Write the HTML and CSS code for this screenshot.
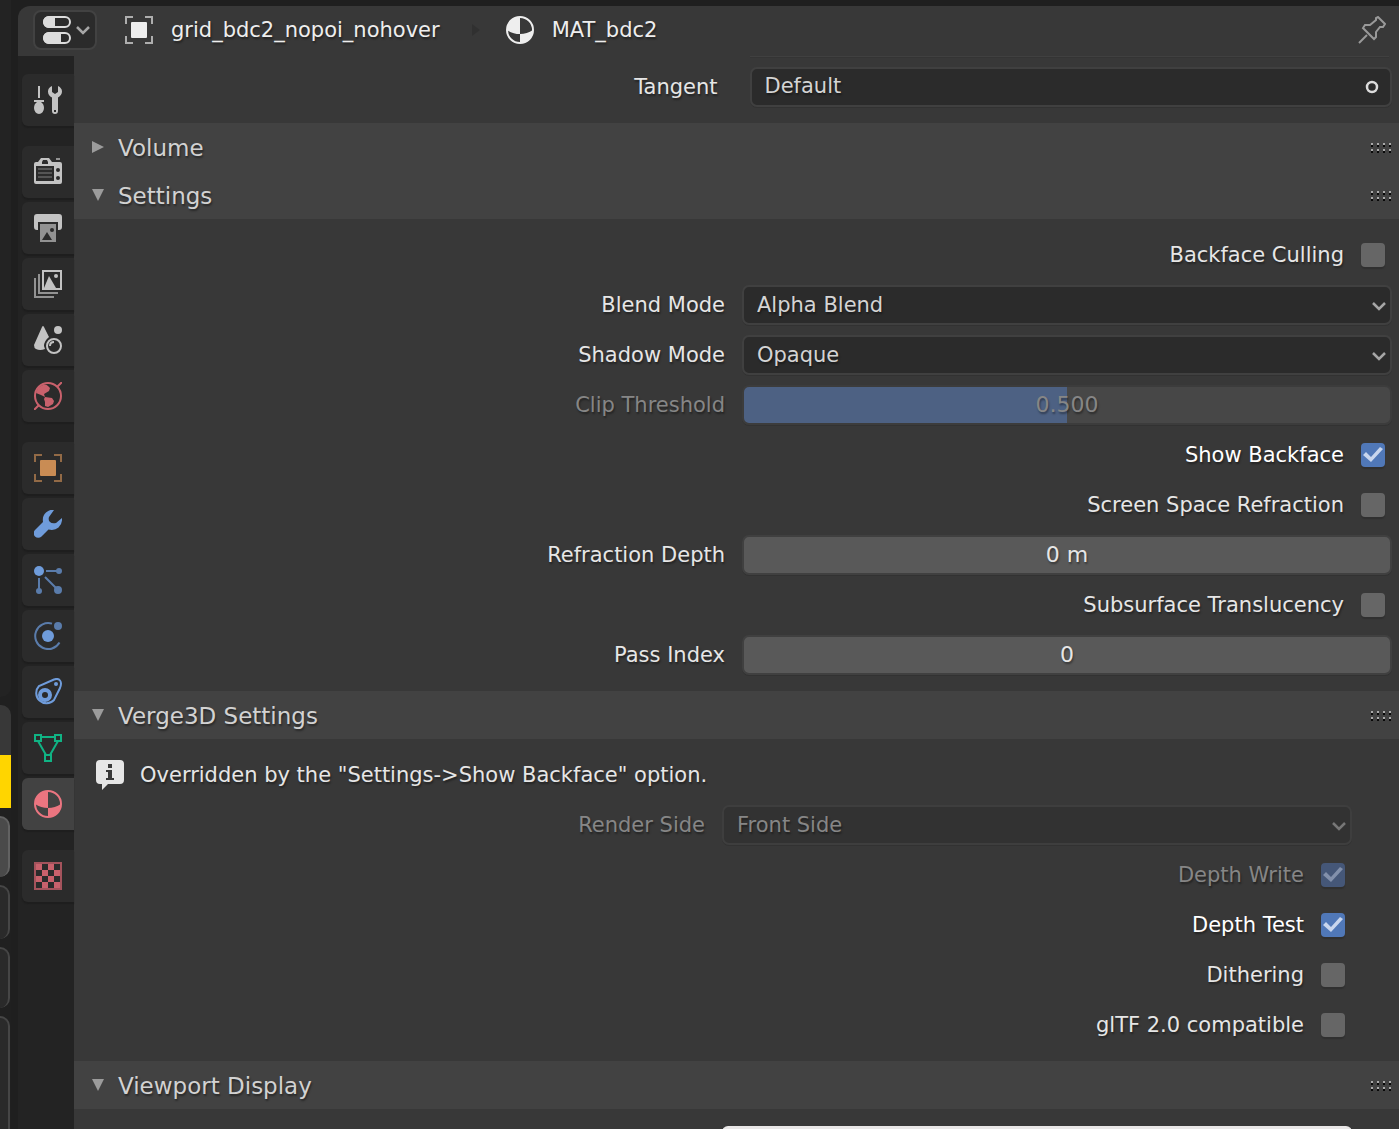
FILE: index.html
```html
<!DOCTYPE html>
<html lang="en">
<head>
<meta charset="utf-8">
<title>Material Properties</title>
<link rel="stylesheet" href="styles.css">
</head>
<body>
<svg class="defs" width="0" height="0" aria-hidden="true">
  <symbol id="chevron" viewBox="0 0 14 10"><path d="M1 2l6 6 6-6" fill="none" stroke="currentColor" stroke-width="2.5"/></symbol>
  <symbol id="object" viewBox="0 0 28 28"><path class="soft" d="M1 8V1h7M20 1h7v7M27 20v7h-7M8 27H1v-7" fill="none" stroke="currentColor" stroke-width="2"/><rect x="6" y="6" width="16" height="16" rx="1" fill="currentColor"/></symbol>
  <symbol id="material" viewBox="0 0 28 28"><circle cx="14" cy="14" r="13" fill="none" stroke="currentColor" stroke-width="2"/><path d="M14 1v17Q7 18 1 14A13 13 0 0 1 14 1zM14 18q7 0 13-4a13 13 0 0 1-13 13z" fill="currentColor"/></symbol>
  <symbol id="grip" viewBox="0 0 22 11"><path d="M1 1h2M7 1h2M13 1h2M19 1h2M1 7h2M7 7h2M13 7h2M19 7h2" stroke="#aaa" stroke-width="2"/><path d="M1 3h2M7 3h2M13 3h2M19 3h2M1 9h2M7 9h2M13 9h2M19 9h2" stroke="#080808" stroke-width="2"/></symbol>
  <symbol id="tri" viewBox="0 0 12 12"><path d="M0 0h12L6 12z" fill="#9b9b9b"/></symbol>
</svg>
<div class="app">
  <div class="neighbour">
    <div class="nb-area"></div>
    <div class="nb-panel"></div>
    <div class="nb-selected"></div>
    <div class="nb-button lit"></div>
    <div class="nb-button"></div>
    <div class="nb-button tall"></div>
    <div class="nb-box"></div>
  </div>
  <div class="editor">
    <header class="bar">
      <button class="editor-type" aria-label="Editor type">
        <svg width="28" height="28" viewBox="0 0 28 28"><g fill="none" stroke="#dcdcdc" stroke-width="2"><rect x="1" y="1" width="26" height="10" rx="5"/><rect x="1" y="17" width="26" height="10" rx="5"/></g><path d="M12 0v12H6A6 6 0 0 1 6 0zM18 16v12H6a6 6 0 0 1 0-12z" fill="#dcdcdc"/></svg>
        <svg class="chev" width="14" height="10"><use href="#chevron"/></svg>
      </button>
      <svg class="crumb-icon object" width="28" height="28"><use href="#object"/></svg>
      <span class="crumb">grid_bdc2_nopoi_nohover</span>
      <svg class="crumb-sep" width="8" height="12" viewBox="0 0 8 12"><path d="M0 0l8 6-8 6z" fill="#303030"/></svg>
      <svg class="crumb-icon" width="28" height="28"><use href="#material"/></svg>
      <span class="crumb">MAT_bdc2</span>
      <button class="pin" aria-label="Pin"><svg width="28" height="28" viewBox="0 0 28 28"><path d="M1 27l8-8M20 1l7 7-2 3-3 0-4 5 0 5-2 2L5 12l2-3h5l6-5V2z" fill="none" stroke="#999" stroke-width="2"/></svg></button>
    </header>
    <div class="main">
      <nav class="tabs">
        <div class="tab-group">
          <button class="tab" aria-label="Tool"><svg width="28" height="28" viewBox="0 0 28 28"><path d="M4 0h2v12H4zM0 14h10v2H7q3 2 3 6a5 6 0 0 1-10 0q0-4 3-6H0zM18 0v6l3 2 3-2V0q4 2 4 5.500t-4 6V25a3 3 0 0 1-6 0V11.500q-4-2-4-6T18 0z" fill="#c3c3c3"/><rect x="20" y="24" width="2" height="2" fill="#2b2b2b"/></svg></button>
        </div>
        <div class="tab-group">
          <button class="tab" aria-label="Render"><svg width="28" height="28" viewBox="0 0 28 28"><path d="M2 4h2l3-4h8l3 4h8q2 0 2 2v18q0 2-2 2H2q-2 0-2-2V6q0-2 2-2z" fill="#c3c3c3"/><path d="M9 2h4l1 2v2H8V4zM2 8h18v15H2z" fill="#2b2b2b"/><path d="M4 11h14M4 15h14M4 19h14" stroke="#555" stroke-width="2"/><path d="M22 1h4" stroke="#929292" stroke-width="2"/><circle cx="24" cy="12" r="2" fill="#2b2b2b"/><circle cx="24" cy="20" r="2" fill="#2b2b2b"/></svg></button>
          <button class="tab" aria-label="Output"><svg width="28" height="28" viewBox="0 0 28 28"><path d="M3 0h22q3 0 3 3v10q0 3-3 3h-1V8H4v8H3q-3 0-3-3V3q0-3 3-3z" fill="#c3c3c3"/><path d="M6 10h16v18H6z" fill="#929292"/><path d="M8 26l5-8 5 8z" fill="#2b2b2b"/><circle cx="18" cy="16" r="2" fill="#2b2b2b"/></svg></button>
          <button class="tab" aria-label="View layer"><svg width="28" height="28" viewBox="0 0 28 28"><path d="M1 8v19h19M5 4v19h19" fill="none" stroke="#929292" stroke-width="2"/><rect x="9" y="1" width="18" height="18" fill="#2b2b2b" stroke="#c3c3c3" stroke-width="2"/><path d="M10 18l5-12 7 12z" fill="#c3c3c3"/><circle cx="22" cy="6" r="2" fill="#c3c3c3"/></svg></button>
          <button class="tab" aria-label="Scene"><svg width="28" height="28" viewBox="0 0 28 28"><path d="M8 1q1-2 2 0l5 10q-5 4-5 9l1 3q-5 2-9 0-2-1-2-4z" fill="#c3c3c3"/><circle cx="24" cy="4" r="4" fill="#c3c3c3"/><circle cx="20" cy="20" r="7" fill="none" stroke="#c3c3c3" stroke-width="2"/><path d="M16 20q0-4 4-4" fill="none" stroke="#c3c3c3" stroke-width="2"/></svg></button>
          <button class="tab" aria-label="World"><svg width="28" height="28" viewBox="0 0 28 28"><g fill="none" stroke="#c9616c" stroke-width="2"><circle cx="14" cy="14" r="13"/><path d="M23 5l5-5M0 28l5-5"/></g><path d="M4 6q7-6 10-2l2 2-1 3-5 3 1 3-4-2-5-2zM11 15l7 1 2 3-1 3-5 3-3-1v-4l-1-3z" fill="#c9616c"/></svg></button>
        </div>
        <div class="tab-group">
          <button class="tab orange" aria-label="Object"><svg class="object" width="28" height="28"><use href="#object"/></svg></button>
          <button class="tab" aria-label="Modifiers"><svg width="28" height="28" viewBox="0 0 28 28"><path d="M20 0q-4-1-8 2.500Q8 6 9 12l-8 8a4.500 4.500 0 0 0 6.500 6.500l7-7q6 1.500 10-2T28 8l-6 5q-4 1-6-1t-1-5z" fill="#6f9cdb"/></svg></button>
          <button class="tab" aria-label="Particles"><svg width="28" height="28" viewBox="0 0 28 28"><g fill="#5a7cab"><circle cx="25" cy="5" r="3"/><circle cx="5" cy="25" r="3"/><circle cx="24" cy="24" r="4"/></g><path d="M12 5h12M5 12v12M11 11l12 12" stroke="#5a7cab" stroke-width="2"/><circle cx="5" cy="5" r="5" fill="#6f9cdb"/></svg></button>
          <button class="tab" aria-label="Physics"><svg width="28" height="28" viewBox="0 0 28 28"><path d="M18 1.600A13 13 0 1 0 25.500 20.500" fill="none" stroke="#5a7cab" stroke-width="2"/><circle cx="24" cy="4" r="4" fill="#5a7cab"/><circle cx="14" cy="14" r="6" fill="#6f9cdb"/></svg></button>
          <button class="tab" aria-label="Constraints"><svg width="28" height="28" viewBox="0 0 28 28"><path d="M20 1.500q4-1.500 6 1t0 7.500l-6 12a10 10 0 1 1-15-14z" fill="none" stroke="#6f9cdb" stroke-width="2"/><circle cx="11" cy="17" r="5" fill="none" stroke="#6f9cdb" stroke-width="4"/><circle cx="22" cy="6" r="2" fill="#6f9cdb"/></svg></button>
          <button class="tab" aria-label="Object data"><svg width="28" height="28" viewBox="0 0 28 28"><path d="M1 1h6v6H1zM21 1h6v6h-6zM11 21h6v6h-6zM7 3h14M4 7l8 14M24 7l-8 14" fill="none" stroke="#10b384" stroke-width="2"/></svg></button>
          <button class="tab active" aria-label="Material"><svg width="28" height="28"><use href="#material"/></svg></button>
        </div>
        <div class="tab-group">
          <button class="tab" aria-label="Texture"><svg width="28" height="28" viewBox="0 0 28 28"><rect x="1" y="1" width="26" height="26" fill="#2b2b2b" stroke="#a4535c" stroke-width="2"/><path d="M2 2h6v6H2zM14 2h6v6h-6zM8 8h6v6H8zM20 8h6v6h-6zM2 14h6v6H2zM14 14h6v6h-6zM8 20h6v6H8zM20 20h6v6h-6z" fill="#c9616c"/></svg></button>
        </div>
      </nav>
      <main class="panels">
        <div class="scrolled-field"></div>
        <section class="body first">
          <div class="row wide">
            <label class="label" for="tangent">Tangent</label>
            <div class="control"><input class="field" id="tangent" type="text" value="Default"><svg class="dot" width="14" height="14" viewBox="0 0 14 14"><circle cx="7" cy="7" r="5" fill="none" stroke="#dcdcdc" stroke-width="2.500"/></svg></div>
          </div>
        </section>
        <h2 class="panel-head"><button><svg class="closed" width="12" height="12"><use href="#tri"/></svg>Volume</button><svg width="22" height="11"><use href="#grip"/></svg></h2>
        <h2 class="panel-head"><button><svg width="12" height="12"><use href="#tri"/></svg>Settings</button><svg width="22" height="11"><use href="#grip"/></svg></h2>
        <section class="body">
          <label class="check">Backface Culling<input type="checkbox"></label>
          <div class="row">
            <label class="label" for="blend">Blend Mode</label>
            <div class="control"><select class="field" id="blend"><option>Alpha Blend</option></select><svg class="chev" width="14" height="10"><use href="#chevron"/></svg></div>
          </div>
          <div class="row">
            <label class="label" for="shadow">Shadow Mode</label>
            <div class="control"><select class="field" id="shadow"><option>Opaque</option></select><svg class="chev" width="14" height="10"><use href="#chevron"/></svg></div>
          </div>
          <div class="row disabled">
            <label class="label" for="clip">Clip Threshold</label>
            <div class="control"><input class="slider" id="clip" type="range" min="0" max="1" step="0.001" value="0.5" disabled><output class="slider-value" for="clip">0.500</output></div>
          </div>
          <label class="check">Show Backface<input type="checkbox" checked></label>
          <label class="check">Screen Space Refraction<input type="checkbox"></label>
          <div class="row">
            <label class="label" for="depth">Refraction Depth</label>
            <div class="control"><input class="number" id="depth" type="text" value="0 m"></div>
          </div>
          <label class="check">Subsurface Translucency<input type="checkbox"></label>
          <div class="row">
            <label class="label" for="pass">Pass Index</label>
            <div class="control"><input class="number" id="pass" type="text" value="0"></div>
          </div>
        </section>
        <h2 class="panel-head"><button><svg width="12" height="12"><use href="#tri"/></svg>Verge3D Settings</button><svg width="22" height="11"><use href="#grip"/></svg></h2>
        <section class="body inset">
          <p class="info"><svg width="28" height="30" viewBox="0 0 28 30"><path d="M4 0h20q4 0 4 4v16q0 4-4 4H12l-6 6v-6H4q-4 0-4-4V4q0-4 4-4z" fill="#e6e6e6"/><path d="M12 4h4v4h-4zM10 10h6v8h2v2h-8v-2h2v-6h-2z" fill="#383838"/></svg>Overridden by the "Settings-&gt;Show Backface" option.</p>
          <div class="row disabled">
            <label class="label" for="side">Render Side</label>
            <div class="control"><select class="field" id="side" disabled><option>Front Side</option></select><svg class="chev" width="14" height="10"><use href="#chevron"/></svg></div>
          </div>
          <label class="check disabled">Depth Write<input type="checkbox" checked disabled></label>
          <label class="check">Depth Test<input type="checkbox" checked></label>
          <label class="check">Dithering<input type="checkbox"></label>
          <label class="check">glTF 2.0 compatible<input type="checkbox"></label>
        </section>
        <h2 class="panel-head"><button><svg width="12" height="12"><use href="#tri"/></svg>Viewport Display</button><svg width="22" height="11"><use href="#grip"/></svg></h2>
        <section class="body inset">
          <div class="row">
            <span></span>
            <div class="control"><button class="swatch" aria-label="Viewport color"></button></div>
          </div>
        </section>
      </main>
    </div>
  </div>
</div>
</body>
</html>
```
FILE: styles.css
```css
* { box-sizing: border-box; }
body {
  margin: 0;
  background: #1f1f1f;
  color: #e6e6e6;
  font: 21px/28px "DejaVu Sans", sans-serif;
  text-shadow: 1px 2px 2px rgba(0, 0, 0, .4);
}
button, input, select { font: inherit; color: inherit; text-shadow: inherit; margin: 0; }
button { border: 0; padding: 0; background: none; }
svg { display: block; flex: none; }
.defs { position: absolute; }
.app { display: flex; height: 100vh; overflow: hidden; }

/* edge of the area to the left */
.neighbour { display: flex; flex-direction: column; width: 11px; margin-right: 7px; background: #202020; overflow: hidden; }
.neighbour > div { flex: none; }
.nb-area { height: 697px; background: #232323; border-bottom-right-radius: 10px; }
.nb-panel { height: 50px; margin-top: 8px; background: #383838; border-top-right-radius: 10px; }
.nb-selected { height: 53px; margin-bottom: 8px; background: #ffd500; }
.nb-button { height: 54px; margin: 0 1px 8px 0; background: #2a2a2a; border: 2px solid #464646; border-width: 2px 2px 0 0; border-radius: 0 10px 10px 0; }
.nb-button.lit { height: 61px; background: #4a4a4a; border-color: #626262; }
.nb-button.tall { height: 61px; }
.nb-box { height: 120px; margin-right: 1px; background: #2a2a2a; border: 2px solid #464646; border-width: 2px 2px 0 0; border-top-right-radius: 10px; }

.editor { display: flex; flex-direction: column; flex: 1; min-width: 0; margin-top: 6px; background: #383838; border-top-left-radius: 12px; overflow: hidden; }
.bar { display: flex; align-items: center; flex: none; height: 50px; padding: 0 13px 2px 15px; }
.editor-type { display: flex; align-items: center; gap: 5px; width: 64px; height: 40px; padding-left: 8px; background: #2b2b2b; border: 2px solid #424242; border-radius: 8px; }
.chev { color: #a6a6a6; }
.crumb-icon { margin: 0 18px 0 28px; color: #eee; }
.crumb { color: #eee; }
.crumb-sep { margin-left: 32px; }
.crumb-sep + .crumb-icon { margin-left: 26px; }
.soft { opacity: .65; }
.pin { margin-left: auto; }

.main { display: flex; flex: 1; min-height: 0; }
.tabs { display: flex; flex-direction: column; flex: none; gap: 20px; width: 56px; padding: 18px 0 0 4px; background: #232323; }
.tab-group { display: flex; flex-direction: column; gap: 4px; }
.tab { display: grid; place-items: center; height: 52px; background: #2b2b2b; border-radius: 6px 0 0 6px; box-shadow: 0 2px 1px #1e1e1e; }
.tab.orange { color: #c98c54; }
.tab.active { background: #424242; color: #eb7580; }

.panels { flex: 1; min-width: 0; overflow: hidden; }
.scrolled-field { height: 2px; margin: 0 10px 4px 51%; background: #343434; border-top: 1px solid #404040; }
.panel-head { display: flex; align-items: center; justify-content: space-between; height: 48px; margin: 0; padding: 2px 7px 0 18px; background: #424242; color: #d2d2d2; font-size: 23px; font-weight: 400; }
.panel-head button { display: flex; align-items: center; gap: 14px; }
.panel-head button svg { margin-bottom: 2px; }
.closed { transform: rotate(-90deg); }
.body { padding: 11px 7px 11px 18px; }
.body.first { padding-top: 0; padding-left: 33px; }
.body.inset { padding-right: 47px; }
.row { display: grid; grid-template-columns: 1fr 1fr; align-items: center; height: 50px; }
.label { padding-right: 17px; text-align: right; }
.wide .label { padding-right: 32px; }
.control { position: relative; }
.field, .number, .slider { display: block; appearance: none; width: 100%; height: 40px; margin: 0; border: 2px solid #404040; border-radius: 7px; box-shadow: 0 1px 0 #323232; opacity: 1; }
.field { padding: 0 13px; background: #2b2b2b; color: #d4d4d4; }
input.field { padding-bottom: 2px; }
.number { padding: 0 0 2px; background: #595959; text-align: center; font-size: 22px; }
.slider { background: linear-gradient(90deg, #4d6183 50%, #474747 50%); border-color: #3c3c3c; }
.slider::-webkit-slider-thumb { appearance: none; width: 1px; }
.slider-value { position: absolute; inset: 6px 0 auto; text-align: center; font-size: 22px; }
.control .chev { position: absolute; right: 6px; top: 16px; }
.dot { position: absolute; right: 13px; top: 13px; }
.check { display: flex; align-items: center; justify-content: flex-end; gap: 17px; height: 50px; padding-right: 7px; }
.check:has(:checked) { color: #fff; }
.check input { position: relative; appearance: none; width: 24px; height: 24px; background: #666; border-radius: 4px; box-shadow: 0 2px 1px #303030; }
.check input:checked { background: #5078b8; }
.check input:checked::before { content: ""; display: block; height: 24px; background: #c8d6ee; clip-path: polygon(2px 12px, 5px 9px, 10px 14px, 19px 4px, 22px 6px, 10px 19px); }
.disabled, .check.disabled { color: #868686; }
.disabled .chev { color: #777; }
.disabled .field { background: #323232; border-color: #3e3e3e; color: #868686; }
.check.disabled input:checked { background: #455778; }
.check.disabled input:checked::before { background: #8290ab; }
.info { display: flex; align-items: center; gap: 16px; height: 50px; margin: 0; padding-left: 4px; }
.swatch { display: block; width: 100%; height: 38px; background: #e9e7e7; border-radius: 6px; }
```
